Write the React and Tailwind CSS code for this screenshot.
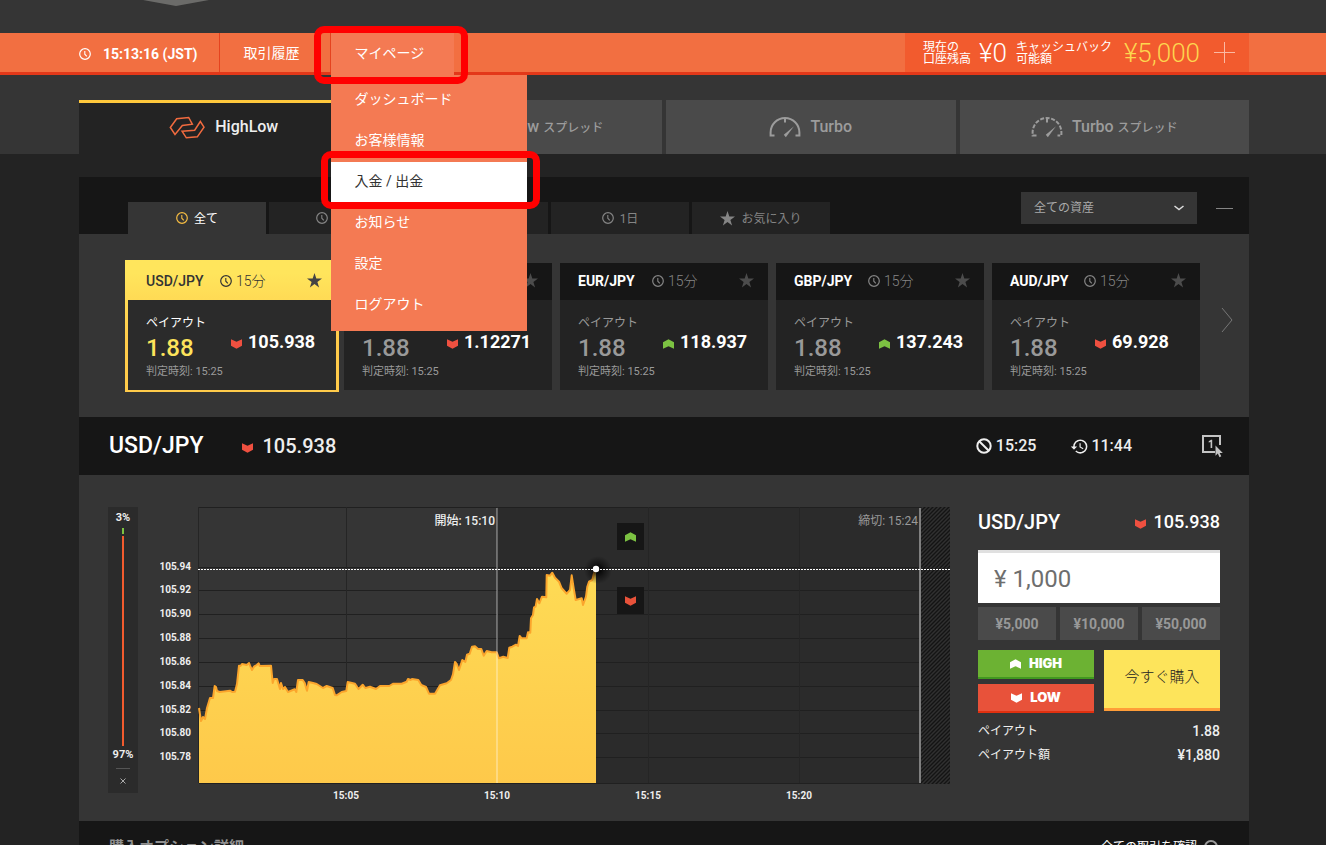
import React from "react";
import { MdHistory } from "react-icons/md";

const FONT = "font-['Roboto','Noto_Sans_CJK_JP',sans-serif]";

function Clock({ className }) {
  return (
    <svg viewBox="0 0 12 12" className={`h-3 w-3 shrink-0 ${className}`} fill="none" stroke="currentColor" aria-hidden="true">
      <circle cx="6" cy="6" r="5.3" strokeWidth="1.2" />
      <path d="M5.8 3v3.2l2 2.2" strokeWidth="1.1" />
    </svg>
  );
}

function Star({ className }) {
  return (
    <svg viewBox="0 0 14 14" className={`h-[15px] w-[15px] shrink-0 ${className}`} fill="currentColor" aria-hidden="true">
      <polygon points="7,0 8.7,5.1 14,5.1 9.7,8.3 11.3,13.5 7,10.3 2.7,13.5 4.3,8.3 0,5.1 5.3,5.1" />
    </svg>
  );
}

function Trend({ up, className = "" }) {
  return (
    <svg viewBox="0 0 11 10" className={`h-[10px] w-[11px] shrink-0 ${className}`} fill="currentColor" aria-hidden="true">
      <path d={up ? "M0 3.2 5.5.3 11 3.2V9.7L5.5 7.2 0 9.7Z" : "M0 .3 5.5 2.8 11 .3V6.8L5.5 9.7 0 6.8Z"} />
    </svg>
  );
}

function LogoIcon() {
  return (
    <svg viewBox="0 0 108 68" className="h-[23px] w-9" fill="none" stroke="#f26b3f" strokeWidth="4.5" aria-hidden="true">
      <path d="M4 34 23 8 59 4 70 24 40 28 18 55Z" />
      <path d="M39 45 77 42 94 16 105 33 85 62 52 65Z" />
    </svg>
  );
}

function Gauge({ dashed }) {
  return (
    <svg viewBox="0 0 32 21" className="h-[21px] w-8" fill="none" stroke="currentColor" aria-hidden="true">
      <path d="M5.5 18.4H1.6V15.4A14.4 14.4 0 0 1 30.4 15.4V18.4H26.5" strokeWidth="2" strokeDasharray={dashed ? "4 1.6" : undefined} />
      <path d="M16 1v4.5" strokeWidth="2" />
      <path d="M25 9.3 14.800 17.8 16.800 20.3Z" fill="currentColor" stroke="none" />
    </svg>
  );
}

const menu = ["ダッシュボード", "お客様情報", "入金 / 出金", "お知らせ", "設定", "ログアウト"];

function NavBar() {
  return (
    <nav className="flex border-b-[3px] border-[#e33819] bg-[#f26f41] pr-[77px] pl-[79px] text-white">
      <div className="flex h-[39px] items-center gap-3 border-r border-[#e5431f] pt-[2px] pr-[21px]">
        <Clock />
        <time className="text-sm font-bold whitespace-nowrap">15:13:16 (JST)</time>
      </div>
      <a href="#history" className="flex h-[39px] items-center border-r border-[#e5431f] pr-[30px] pl-6 text-sm whitespace-nowrap">取引履歴</a>
      <div className="relative -mb-[3px]">
        <a href="#mypage" className="flex h-[42px] items-center bg-[#f47a53] pr-[30px] pb-[3px] pl-6 text-sm whitespace-nowrap">マイページ</a>
        <ul className="absolute top-full left-0 z-20 w-[196px] bg-[#f47a53] py-[5px]">
          {menu.map((m, i) => (
            <li key={m} className="relative">
              <a href={`#menu-${i}`} className={`flex h-[41px] items-center px-6 pb-[3px] text-sm ${i === 2 ? "bg-white text-[#333]" : "text-white"}`}>{m}</a>
              {i === 2 && (
                <span className="pointer-events-none absolute -top-[11px] -right-[13px] -bottom-[6px] -left-[10px] z-10 rounded-[10px] border-[7px] border-[#ff0000]" />
              )}
            </li>
          ))}
        </ul>
        <span className="pointer-events-none absolute -top-[7px] -right-[14px] -bottom-[9px] -left-[17px] z-30 rounded-[10px] border-[7px] border-[#ff0000]" />
      </div>
      <div className="ml-auto flex h-[39px] items-center bg-[#f25b2e] pr-[14px] pl-[18px] whitespace-nowrap">
        <span className="text-xs leading-3">現在の<br />口座残高</span>
        <span className="ml-2 text-[26px] leading-8 font-light">¥0</span>
        <span className="ml-[9px] text-xs leading-3">キャッシュバック<br />可能額</span>
        <span className="ml-3 text-[26px] leading-8 font-light text-[#fdd64f]">¥5,000</span>
        <button type="button" aria-label="入金" className="ml-[14px]">
          <svg viewBox="0 0 21 21" className="h-[21px] w-[21px]" stroke="#fbb9a3" aria-hidden="true"><path d="M10.5 0v21M0 10.5h21" /></svg>
        </button>
      </div>
    </nav>
  );
}

function ProductTabs() {
  const base = "flex h-[54px] items-center justify-center gap-[9px] bg-[#4a4a4a] text-[#9c9c9c]";
  return (
    <div className="grid grid-cols-4 gap-1 pt-[25px] pr-[77px] pl-[79px] text-base font-medium whitespace-nowrap">
      <button type="button" className="flex h-[54px] items-center justify-center gap-[10px] border-t-[3px] border-[#ffc83c] bg-[#232323] pb-[3px] text-[#eee]">
        <LogoIcon />HighLow
      </button>
      <button type="button" className={base}><LogoIcon /><span>HighLow <span className="text-xs">スプレッド</span></span></button>
      <button type="button" className={base}><Gauge />Turbo</button>
      <button type="button" className={base}><Gauge dashed /><span>Turbo <span className="text-xs">スプレッド</span></span></button>
    </div>
  );
}

const filters = ["全て", "15分", "1時間", "1日"];

function FilterBar() {
  return (
    <div className="flex h-[57px] items-end bg-[#161616] pl-[49px]">
      <div className="flex gap-[3px] text-xs">
        {filters.map((f, i) => (
          <button key={f} type="button" className={`flex h-8 w-[138px] items-center justify-center gap-[6px] ${i === 0 ? "bg-[#353535] text-white" : "bg-[#232323] text-[#858585]"}`}>
            <Clock className={i === 0 ? "text-[#f5bc42]" : ""} /><span className="pt-px">{f}</span>
          </button>
        ))}
        <button type="button" className="flex h-8 w-[138px] items-center justify-center gap-[6px] bg-[#232323] text-[#858585]">
          <Star /><span className="pt-px">お気に入り</span>
        </button>
      </div>
      <div className="mb-[10px] ml-auto flex items-center gap-[19px] pr-4">
        <div className="relative">
          <select aria-label="資産" className="h-8 w-[176px] appearance-none rounded-none bg-[#353535] px-[13px] text-xs text-[#aaa]">
            <option>全ての資産</option>
          </select>
          <svg viewBox="0 0 10 6" className="pointer-events-none absolute top-[13px] right-[13px] h-[6px] w-[10px]" fill="none" stroke="#ddd" strokeWidth="1.5" aria-hidden="true"><path d="M.5 1 5 4.5 9.5 1" /></svg>
        </div>
        <button type="button" aria-label="閉じる" className="flex h-8 w-[17px] items-center">
          <span className="h-px w-full bg-[#858585]" />
        </button>
      </div>
    </div>
  );
}

const cards = [
  { pair: "USD/JPY", price: "105.938", up: false, active: true },
  { pair: "EUR/USD", price: "1.12271", up: false },
  { pair: "EUR/JPY", price: "118.937", up: true },
  { pair: "GBP/JPY", price: "137.243", up: true },
  { pair: "AUD/JPY", price: "69.928", up: false },
];

function AssetCard({ pair, price, up, active }) {
  return (
    <article className={active ? "-m-[3px] -mb-[2px] bg-linear-to-b from-[#ffe55c] from-10% to-[#ffcb4a] to-60% p-[3px] pb-[2px]" : ""}>
      <header className={`flex h-[37px] items-center pr-[14px] pb-[2px] pl-[18px] text-sm ${active ? "text-[#333]" : "bg-[#161616] text-[#858585]"}`}>
        <h3 className={`w-[74px] ${active ? "font-medium" : "font-bold text-white"}`}>{pair}</h3>
        <Clock />
        <span className="ml-1 font-light">15分</span>
        <Star className={`ml-auto ${active ? "text-[#444]" : "text-[#4c4c4c]"}`} />
      </header>
      <div className={`pt-[15px] pb-[10px] pl-[18px] ${active ? "bg-[#2b2b2b]" : "bg-[#232323]"}`}>
        <p className={`text-xs leading-4 ${active ? "text-white" : "text-[#999]"}`}>ペイアウト</p>
        <div className="mt-[3px] flex h-7">
          <span className={`w-[85px] text-2xl leading-7 font-medium ${active ? "text-[#fde35b]" : "text-[#999]"}`}>1.88</span>
          <span className="flex h-4 items-center gap-[6px] text-lg leading-4 font-bold text-white">
            <Trend up={up} className={up ? "mt-1 text-[#7cc242]" : "mt-1 text-[#ef5040]"} />{price}
          </span>
        </div>
        <p className="mt-[2px] text-[11px] leading-4 text-[#9a9a9a]">判定時刻: 15:25</p>
      </div>
    </article>
  );
}

function InfoBar() {
  return (
    <div className="flex h-[58px] items-center bg-[#161616] pr-[25px] pl-[30px] font-medium text-[#eee]">
      <h2 className="text-[23px] text-white">USD/JPY</h2>
      <Trend className="mt-1 ml-[39px] text-[#ef5040]" />
      <span className="ml-[9px] text-xl">105.938</span>
      <span className="ml-auto flex items-center gap-1">
        <svg viewBox="0 0 16 16" className="h-4 w-4" fill="none" stroke="currentColor" strokeWidth="2" aria-hidden="true"><circle cx="8" cy="8" r="6.700" /><path d="m3.2 3.2 9.6 9.6" /></svg>
        15:25
      </span>
      <span className="ml-[34px] flex items-center gap-[2px]"><MdHistory className="h-[19px] w-[19px]" />11:44</span>
      <button type="button" aria-label="ワンクリック注文" className="ml-[70px]">
        <svg viewBox="0 0 22 24" className="h-6 w-[22px]" aria-hidden="true">
          <path d="M18 11V2H1v16h12" fill="none" stroke="#c4c4c4" strokeWidth="2" />
          <path d="M6.7 7.2 9 5.8h1.2V14H8.6V7.9l-1.900.7Z" fill="#c4c4c4" />
          <path d="M13.5 11.5v10.3l2.3-2.2 1.7 3.6 1.8-.9-1.7-3.4h3.2Z" fill="#c4c4c4" />
        </svg>
      </button>
    </div>
  );
}

function Sentiment() {
  return (
    <aside className="flex w-[30px] flex-col items-center self-start bg-[#2b2b2b] pt-[3px] pb-1 text-[11px] leading-4 font-bold text-[#eee]">
      <span>3%</span>
      <span className="mt-[2px] h-[6px] w-[2px] bg-[#7cc242]" />
      <span className="mt-[2px] h-[210px] w-[2px] bg-[#f25b2e]" />
      <span className="mt-px">97%</span>
      <span className="mt-[5px] h-px w-[14px] bg-[#555]" />
      <button type="button" aria-label="非表示" className="mt-1 flex h-4 w-full items-center justify-center">
        <svg viewBox="0 0 6 6" className="h-[6px] w-[6px]" stroke="#aaa" aria-hidden="true"><path d="M.5.5l5 5M5.5.5l-5 5" /></svg>
      </button>
    </aside>
  );
}

const series =
  "199,708 201,721 203,717 205,719 207,708 210,698 213,698 214.7,686 216,687 217,691 219.7,692 230,690.7 232,692 235,691.7 237,684 239,665.7 240.5,666 242,664 246.7,665 249,663 250,665.7 252,670 254,666.7 256.7,665 258.7,663.3 259.7,666 271,665.7 272.7,683 274,679 277,679 280,689 281,683 283,689 285,687 288,692 294.7,689.3 296.3,692 298,680 302.7,680 304.7,683 307,690.7 308.7,682 313,683 316.7,684 323,688 326.7,686 332.7,688 335,695 336.7,695.3 341.7,692 346.3,691 347.7,682 355,683.7 358.5,689 362.7,684.7 365.3,688 370,686.7 376,689 380,686 389.3,686 393.3,683.7 401.7,683.7 406.7,681.7 408,679 410.7,680 412,679 418.3,680 421.3,685 426,687 429,693.7 435,693.7 440,685.3 446.7,683.3 451,680 453,674.3 455,662 456.7,664 459,670 462.3,660 465.3,662 467,654.7 469.7,653.7 472,646.7 475,646.3 478,649 481.3,649 483.7,655.7 486.7,651 491.7,652.3 496.7,652.3 499,658.3 503.3,656.7 507.7,658 509.3,647.7 512.3,646.7 516,644.7 518,646 519.7,636 521.7,638.3 526.7,638.3 528,632.3 530.3,632.7 531,618.3 533,615 534,607.3 535.6,606.6 537,599 539.3,603.3 542,596.7 546.3,597.3 546.7,575 550,575.7 552.3,572.7 555,577.7 559,581.7 561.7,588.3 566.7,593.7 570,590 571.7,575.3 573.7,588.3 575.7,600 581.7,598.3 583,605 586,596.7 587.3,586.7 589,581.7 592.3,580 594,573.3 596,569.5";

const yTicks = [
  ["105.94", 567], ["105.92", 590], ["105.90", 614], ["105.88", 638], ["105.86", 662],
  ["105.84", 686], ["105.82", 710], ["105.80", 733], ["105.78", 757],
];
const xTicks = [["15:05", 346], ["15:10", 497], ["15:15", 648], ["15:20", 799]];

function Chart() {
  return (
    <div className="relative min-w-0 flex-1">
      <svg viewBox="160 507 790 296" className="block w-full" role="img" aria-label="USD/JPY チャート">
        <defs>
          <linearGradient id="area" x1="0" y1="0" x2="0" y2="1">
            <stop offset="0" stopColor="#fedb55" />
            <stop offset="1" stopColor="#fec94a" />
          </linearGradient>
          <radialGradient id="halo">
            <stop offset="0.2" stopColor="#000" stopOpacity="0.8" />
            <stop offset="0.5" stopColor="#000" stopOpacity="0.45" />
            <stop offset="1" stopColor="#000" stopOpacity="0" />
          </radialGradient>
          <pattern id="hatch" width="4" height="4" patternUnits="userSpaceOnUse">
            <rect width="4" height="4" fill="#303030" />
            <path d="M-1 1 1-1M0 4 4 0M3 5 5 3" stroke="#141414" strokeWidth="1.4" />
          </pattern>
        </defs>
        <g shapeRendering="crispEdges">
          <rect x="497" y="507" width="424" height="276" fill="#2b2b2b" />
          {[507, ...yTicks.map((t) => t[1]), 783].map((y) => (
            <rect key={y} x="199" y={y} width="751" height="1" fill="#202020" />
          ))}
          {[198, ...xTicks.map((t) => t[1])].map((x) => (
            <rect key={x} x={x} y="507" width="1" height="276" fill="#252525" />
          ))}
        </g>
        <rect x="921" y="507" width="29" height="277" fill="url(#hatch)" />
        <polygon points={`199,783 ${series} 596,783`} fill="url(#area)" />
        <polyline points={series} fill="none" stroke="#fba52c" strokeWidth="2" strokeLinejoin="round" />
        <g shapeRendering="crispEdges">
          <rect x="496" y="508" width="2" height="275" fill="#fff" fillOpacity="0.3" />
          <rect x="919" y="508" width="2" height="275" fill="#808080" />
        </g>
        <circle cx="598" cy="570" r="14" fill="url(#halo)" />
        <path d="M198 569.5H950" stroke="#fff" strokeDasharray="2 1" shapeRendering="crispEdges" />
        <circle cx="596" cy="569" r="3.2" fill="#fff" />
        <g fill="#eee" fontSize="10" fontWeight="700">
          {yTicks.map(([t, y]) => <text key={t} x="191" y={y + 3} textAnchor="end">{t}</text>)}
          {xTicks.map(([t, x]) => <text key={t} x={x} y="799" textAnchor="middle">{t}</text>)}
        </g>
        <g fontSize="12" textAnchor="end">
          <text x="495" y="525" fill="#eee" fontWeight="500">開始: 15:10</text>
          <text x="918" y="525" fill="#999">締切: 15:24</text>
        </g>
      </svg>
      <button type="button" aria-label="High" className="absolute top-4 left-[457px] flex h-[27px] w-[27px] items-center justify-center bg-[#161616] text-[#7cc242]"><Trend up /></button>
      <button type="button" aria-label="Low" className="absolute top-20 left-[457px] flex h-[27px] w-[27px] items-center justify-center bg-[#161616] text-[#e8523a]"><Trend /></button>
    </div>
  );
}

function OrderPanel() {
  const side = "flex h-[29px] items-center justify-center gap-2 border-b-2 font-['Inter',sans-serif] text-[13px] font-black";
  return (
    <form className="w-[242px] shrink-0" onSubmit={(e) => e.preventDefault()}>
      <div className="flex h-[30px] items-center font-medium text-white">
        <h2 className="text-xl">USD/JPY</h2>
        <Trend className="mt-1 mr-2 ml-auto text-[#ef5040]" />
        <span className="text-lg">105.938</span>
      </div>
      <input aria-label="購入金額" defaultValue="¥ 1,000" className="mt-[13px] block h-[53px] w-full rounded-none border-t-[3px] border-[#e0e0e0] bg-white px-4 pt-[2px] text-2xl text-[#6e6e6e]" />
      <div className="mt-1 grid grid-cols-3 gap-1 text-sm font-bold text-[#989898]">
        {["¥5,000", "¥10,000", "¥50,000"].map((a) => (
          <button key={a} type="button" className="h-[33px] bg-[#4a4a4a]">{a}</button>
        ))}
      </div>
      <div className="mt-[10px] grid grid-cols-2 items-start gap-[10px] text-white">
        <div className="grid gap-[5px]">
          <button type="button" className={`${side} border-[#41991f] bg-[#6cb233]`}><Trend up />HIGH</button>
          <button type="button" className={`${side} border-[#e0300f] bg-[#e8523a]`}><Trend />LOW</button>
        </div>
        <button type="submit" className="h-[61px] border-b-[3px] border-[#ff9d38] bg-[#fde45b] pb-[3px] text-[15px] font-light text-[#222]">今すぐ購入</button>
      </div>
      <dl className="mt-[6px] text-[#eee]">
        <div className="flex h-6 items-center justify-between"><dt className="text-xs">ペイアウト</dt><dd className="text-sm font-medium">1.88</dd></div>
        <div className="flex h-6 items-center justify-between"><dt className="text-xs">ペイアウト額</dt><dd className="text-sm font-medium">¥1,880</dd></div>
      </dl>
    </form>
  );
}

export default function App() {
  return (
    <div className={`min-h-screen bg-[#232323] ${FONT}`}>
      <header className="bg-[#353535]">
        <div className="h-[33px] pl-[143px]">
          <svg viewBox="0 0 66 6" className="h-[6px] w-[66px]" aria-hidden="true"><path d="M0 0H66L33 6Z" fill="#6b6b69" /></svg>
        </div>
        <NavBar />
        <ProductTabs />
      </header>
      <main className="pt-[23px] pr-[77px] pl-[79px]">
        <FilterBar />
        <section className="flex bg-[#353535] pt-[29px] pb-[27px] pl-[49px]">
          <div className="grid flex-1 grid-cols-5 gap-2">
            {cards.map((c) => <AssetCard key={c.pair} {...c} />)}
          </div>
          <button type="button" aria-label="次へ" className="flex w-[49px] items-center justify-center pb-[14px] pl-[5px]">
            <svg viewBox="0 0 12 26" className="h-[26px] w-3" fill="none" stroke="#777" aria-hidden="true"><path d="M1 1 11 13 1 25" /></svg>
          </button>
        </section>
        <InfoBar />
        <section className="flex bg-[#353535] pt-8 pr-[29px] pb-[18px] pl-[29px]">
          <Sentiment />
          <div className="ml-[22px] flex min-w-0 flex-1 gap-7">
            <Chart />
            <OrderPanel />
          </div>
        </section>
        <section className="flex items-center bg-[#161616] px-[30px] pt-[14px] pb-4 leading-6">
          <h2 className="text-[15px] font-bold text-[#909090]">購入オプション詳細</h2>
          <a href="#trades" className="ml-auto flex items-center gap-[6px] text-xs text-white">
            全ての取引を確認
            <svg viewBox="0 0 16 16" className="h-4 w-4" fill="none" stroke="#999" strokeWidth="2" aria-hidden="true"><circle cx="8" cy="8" r="6" /></svg>
          </a>
        </section>
      </main>
    </div>
  );
}
